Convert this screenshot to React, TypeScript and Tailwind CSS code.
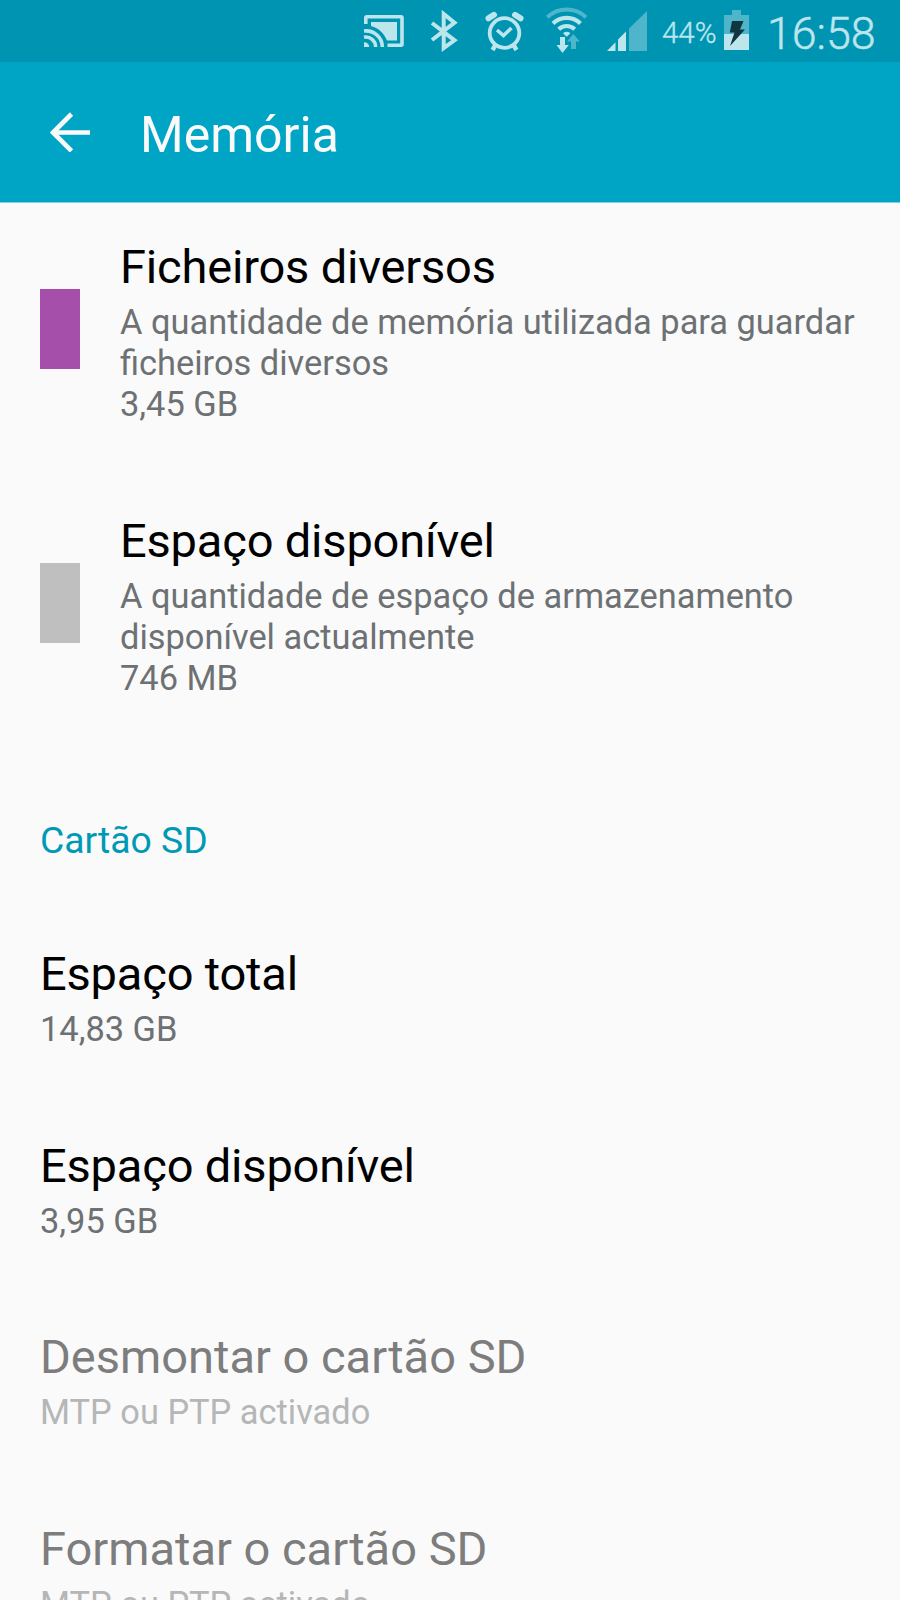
import React from "react";

type Entry = {
  title: string;
  lines: string[];
  swatch?: string;
  disabled?: boolean;
};

const usage: Entry[] = [
  {
    title: "Ficheiros diversos",
    lines: ["A quantidade de memória utilizada para guardar", "ficheiros diversos", "3,45 GB"],
    swatch: "bg-[#a54eaa]",
  },
  {
    title: "Espaço disponível",
    lines: ["A quantidade de espaço de armazenamento", "disponível actualmente", "746 MB"],
    swatch: "bg-[#bfbfbf]",
  },
];

const card: Entry[] = [
  { title: "Espaço total", lines: ["14,83 GB"] },
  { title: "Espaço disponível", lines: ["3,95 GB"] },
  { title: "Desmontar o cartão SD", lines: ["MTP ou PTP activado"], disabled: true },
  { title: "Formatar o cartão SD", lines: ["MTP ou PTP activado"], disabled: true },
];

function StatusIcons() {
  return (
    <svg className="h-[62px] w-[300px] shrink-0" viewBox="350 0 300 62" fill="none">
      <g stroke="#bce5ec" strokeWidth="3.6">
        <path d="M365.8 24V17.800a1 1 0 0 1 1-1H401a1 1 0 0 1 1 1v26.400a1 1 0 0 1-1 1H387.500" />
        <path d="M364 31a16.200 16.200 0 0 1 18.300 16" />
        <path d="M364 37.300a9.600 9.600 0 0 1 11.600 9.700" />
      </g>
      <path d="M364 42.300a4.700 4.700 0 0 1 5.200 4.700H364zM371 22h26v18.500H387C384 33.500 379 28 371 26z" fill="#bce5ec" />
      <path d="M432 23l22.500 17.300L443.700 48V14l10.800 8.700L432 40" stroke="#bce5ec" strokeWidth="4" />
      <g stroke="#bce5ec">
        <circle cx="504.500" cy="33" r="14.800" strokeWidth="3.800" />
        <path d="M497 30l6.500 5.500L511.500 28" strokeWidth="3.600" />
        <path d="M488.500 18.300l5.500-3.500M520.500 18.300l-5.500-3.500" strokeWidth="6" strokeLinecap="round" />
        <path d="M495.500 45l-3 5M513.500 45l3 5" strokeWidth="4.400" />
      </g>
      <path d="M547.300 17.300a28 28 0 0 1 38.700 0" stroke="#4fb5ca" strokeWidth="4" />
      <g stroke="#bce5ec" strokeWidth="4.2">
        <path d="M553 23.400a19.500 19.500 0 0 1 27.400 0" />
        <path d="M558.700 29.200a11.600 11.600 0 0 1 16 0" />
      </g>
      <path d="M563 33.200q3.700-2.800 7.400 0l-3.700 3.500z" fill="#bce5ec" />
      <path d="M560 37h5v8h3.800l-6.300 8-6-8h3.500z" fill="#bce5ec" />
      <path d="M573.300 34l6.500 7.500H576V49h-5v-7.500H567z" fill="#4fb5ca" />
      <path d="M607 51l8.500-8.800V51zM618 51V39.500l8-8V51z" fill="#bce5ec" />
      <path d="M629 51V28.500L647 11V51z" fill="#4fb5ca" />
    </svg>
  );
}

function Battery() {
  return (
    <svg className="ml-[7px] h-[62px] w-[26px] shrink-0" viewBox="724 0 26 62">
      <path d="M724 15h8v-5h9v5h8v19h-25z" fill="#4fb5ca" />
      <path d="M724 34h25v16h-25z" fill="#bce5ec" />
      <path d="M732 21h11.500l-3.500 8.500h5L730 46l4.500-13.500h-4.700z" fill="#10373f" />
    </svg>
  );
}

function Row({ title, lines, swatch, disabled }: Entry) {
  return (
    <li className={swatch ? "flex h-[273.500px] shrink-0 gap-10 pt-9 pl-10" : "flex h-[191.500px] shrink-0 pt-9 pl-10"}>
      {swatch && <div className={`mt-[51px] h-20 w-10 shrink-0 ${swatch}`} />}
      <div className="pt-px whitespace-nowrap">
        <h2 className={`text-[47px] leading-[56px] ${disabled ? "text-[#7d7d7d]" : "tracking-[-0.18px] text-black"}`}>{title}</h2>
        <div className={`mt-[7px] text-[34.4px] leading-[41px] ${disabled ? "text-[#b4b6b7]" : "text-[#6d7174]"}`}>
          {lines.map((line) => (
            <p key={line}>{line}</p>
          ))}
        </div>
      </div>
    </li>
  );
}

export default function App() {
  return (
    <div className="flex h-[1600px] w-[900px] flex-col overflow-hidden bg-[#fafafa] font-[Roboto,sans-serif]">
      <div className="flex h-[62px] shrink-0 items-center bg-[#0094b3] pl-[350px] text-[#bce5ec]">
        <StatusIcons />
        <span className="ml-[12px] w-[55px] pt-[4px] text-[29.5px] leading-[62px] font-light whitespace-nowrap [-webkit-text-stroke:0.4px_#bce5ec]">44%</span>
        <Battery />
        <span className="ml-[17px] pt-[5px] text-[44.7px] leading-[66px] font-light whitespace-nowrap [-webkit-text-stroke:0.5px_#bce5ec]">16:58</span>
      </div>
      <header className="flex h-[140px] shrink-0 items-center bg-[#00a5c6] pl-[50px] text-[#fafafa]">
        <svg className="h-10 w-10" viewBox="0 0 40 40" fill="none" stroke="currentColor" strokeWidth="4.6">
          <path d="M40 20.500H4M21.500 2L3 20.500 21.500 39" />
        </svg>
        <h1 className="ml-[50px] pt-[5px] text-[50px] leading-[60px]">Memória</h1>
      </header>
      <main className="border-t border-[#7fd0e1]">
        <ul className="-mt-px flex flex-col">
          {usage.map((entry) => (
            <Row key={entry.title} {...entry} />
          ))}
        </ul>
        <h3 className="h-[160px] pt-[66px] pl-10 text-[37.3px] leading-[50px] text-[#0099b5]">Cartão SD</h3>
        <ul className="flex flex-col">
          {card.map((entry) => (
            <Row key={entry.title} {...entry} />
          ))}
        </ul>
      </main>
    </div>
  );
}
